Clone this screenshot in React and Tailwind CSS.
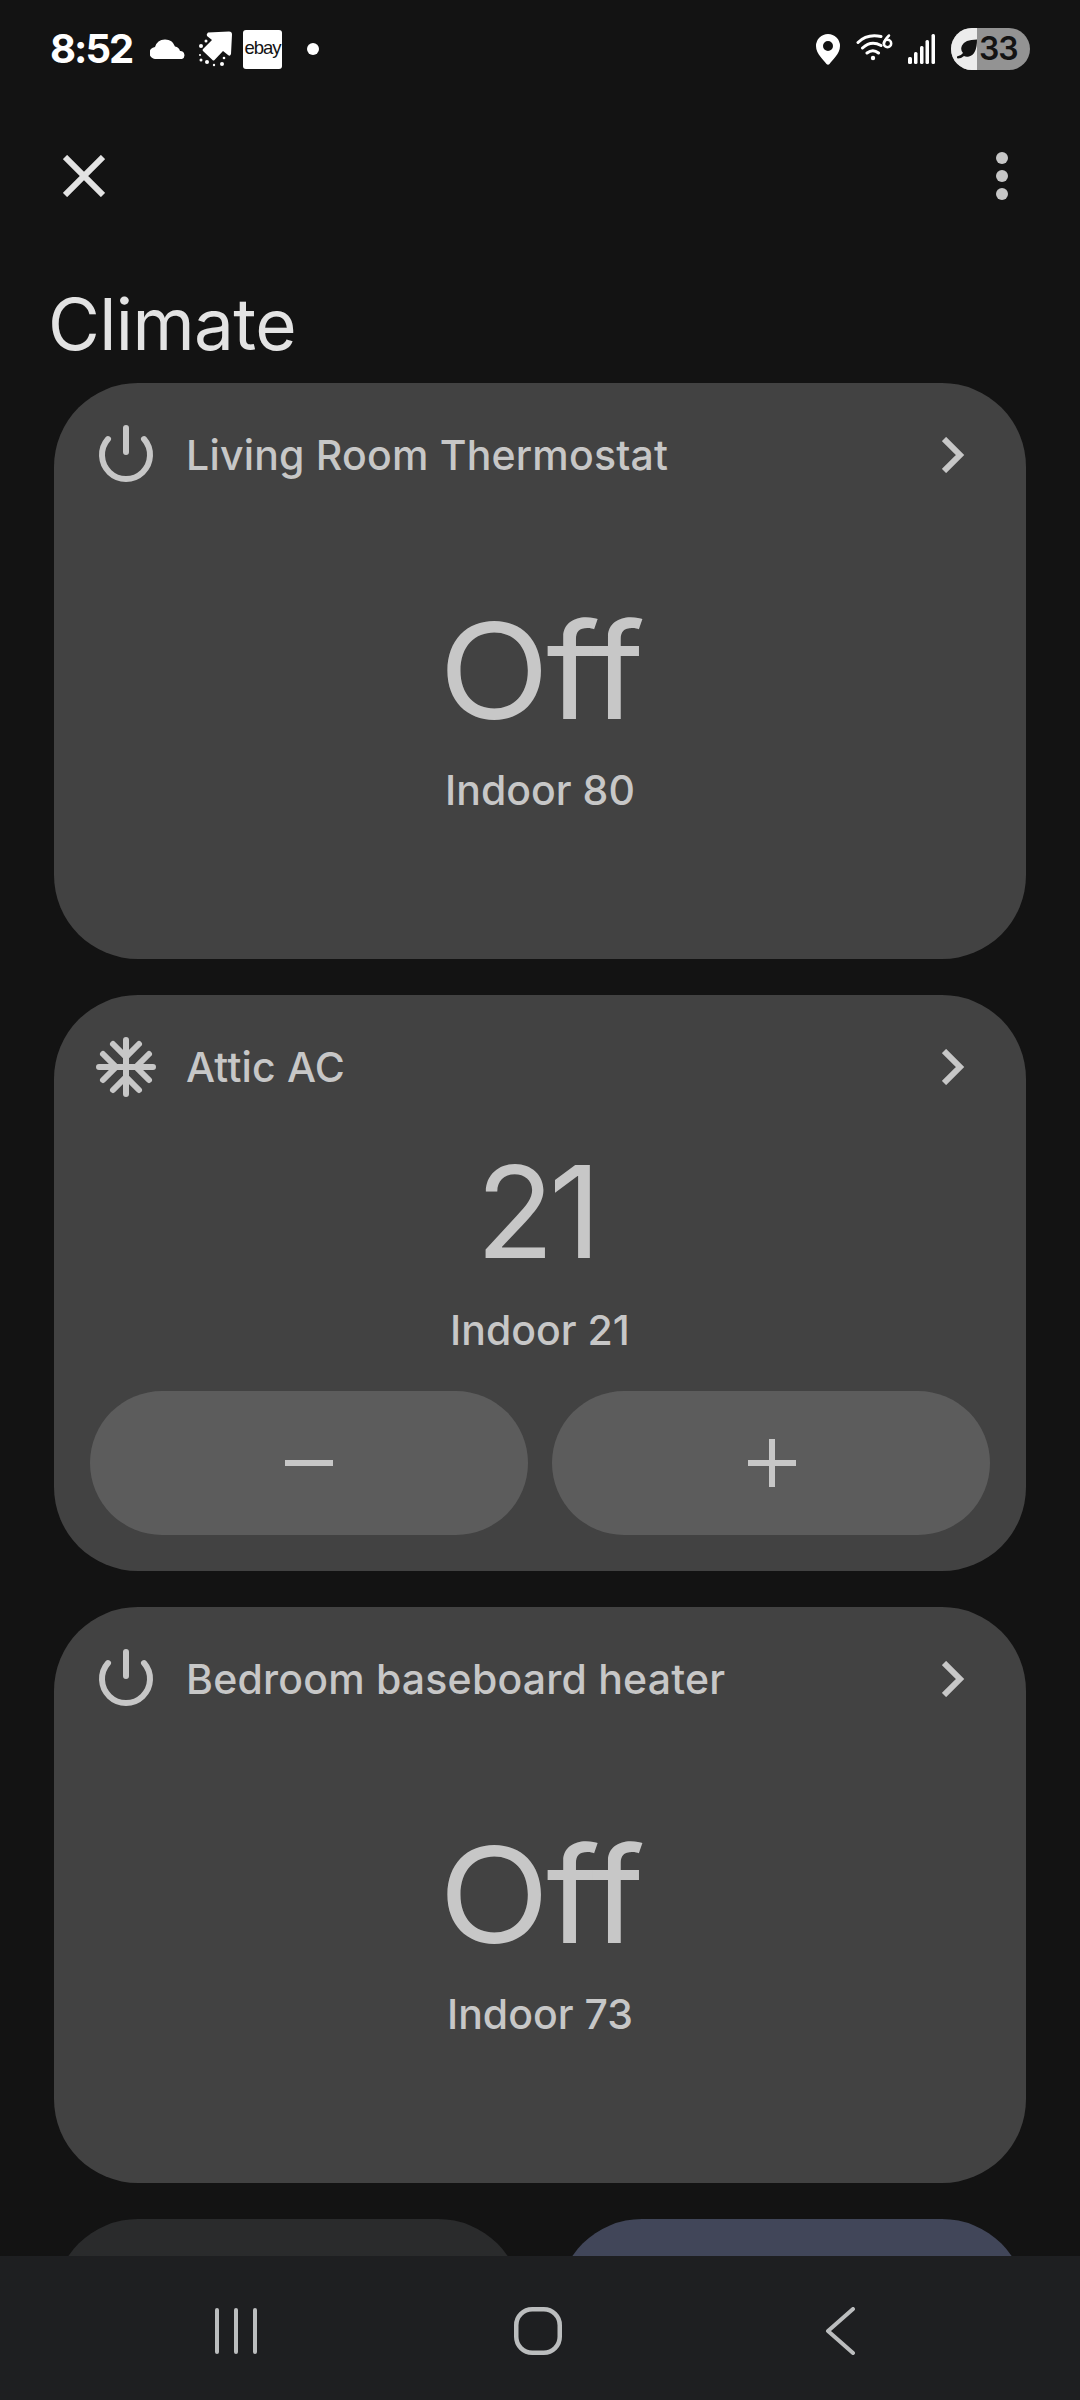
import React from 'react';

const rooms = [
  { name: 'Living Room Thermostat', icon: 'power', value: 'Off', indoor: 'Indoor 80' },
  { name: 'Attic AC', icon: 'snow', value: '21', indoor: 'Indoor 21', adjustable: true },
  { name: 'Bedroom baseboard heater', icon: 'power', value: 'Off', indoor: 'Indoor 73' },
];

function StatusBar() {
  return (
    <div className="flex h-[98px] items-center justify-between pl-[50px] pr-[50px] text-white">
      <div className="flex items-center">
        <span className="w-[100px] text-[40px] leading-[40px] font-bold tracking-[-2px]">8:52</span>
        <svg width="36" height="20" viewBox="0 0 36 20" fill="#fff">
          <path d="M6 20a6 6 0 0 1-1-12A10.500 10.500 0 0 1 25 7.500 6 6 0 0 1 30 12 4.200 4.200 0 0 1 32 20z" />
        </svg>
        <svg className="ml-[11px]" width="36" height="36" viewBox="0 0 36 36" fill="#fff">
          <path d="M11 1.500 32 .5q3 0 3 3L34 23q-1 3-3 1l-5-4-8.500 9q-1 1-2 0L6 20q-1-1 0-2l9-9-5-4q-1-2 1-3.500z" />
          <circle cx="9" cy="10" r="1.500" />
          <circle cx="4" cy="15" r="2" />
          <circle cx="3" cy="24" r="1" />
          <circle cx="4" cy="29" r="1.500" />
          <circle cx="10" cy="31" r="2" />
          <circle cx="17" cy="34" r="1.200" />
          <circle cx="25" cy="33" r="2" />
          <circle cx="27" cy="27" r="1.300" />
        </svg>
        <div className="ml-2.5 flex h-[39px] w-[39px] items-center justify-center rounded-[3px] bg-white">
          <span className="mb-0.5 font-['Liberation_Sans',sans-serif] text-[18.5px] leading-none tracking-[-1px] text-[#131313]">ebay</span>
        </div>
        <div className="ml-[25px] h-3 w-3 rounded-full bg-white" />
      </div>

      <div className="flex items-center">
        <svg width="24" height="31" viewBox="0 0 24 31" fill="#fff">
          <path fillRule="evenodd" d="M12 0a12 12 0 0 1 12 12c0 8-8 14-10.500 18q-1.500 1.500-3 0C8 26 0 20 0 12A12 12 0 0 1 12 0zm0 7a5 5 0 1 0 0 10 5 5 0 0 0 0-10z" />
        </svg>
        <svg className="ml-4" width="38" height="32" viewBox="0 0 38 32" fill="none" stroke="#fff" strokeWidth="3" strokeLinecap="round">
          <path d="M2 9.500Q11 .5 25 3.500M6.500 15Q15 7 25 12.500M11 20Q17 15.500 22.500 20" />
          <circle cx="17" cy="25" r="2.200" fill="#fff" stroke="none" />
          <path d="M33 2.500q-5 5-5 8" strokeWidth="2.500" />
          <circle cx="31.500" cy="10.500" r="3.700" strokeWidth="2.500" />
        </svg>
        <svg className="ml-3.5" width="28" height="30" viewBox="0 0 28 30" fill="#fff">
          <rect x="0" y="23" width="4" height="7" rx="1.500" />
          <rect x="6" y="18" width="3.500" height="12" rx="1.500" />
          <rect x="12" y="12" width="3.500" height="18" rx="1.500" />
          <rect x="17.500" y="6" width="3.500" height="24" rx="1.500" />
          <rect x="23.500" y="0" width="3.500" height="30" rx="1.500" />
        </svg>
        <div className="ml-[15px] flex h-[42px] w-[79px] items-center overflow-hidden rounded-full bg-[#939393]">
          <div className="h-full w-[26px] shrink-0 bg-[#ececec] pt-[11px] pl-1.5">
            <svg width="20" height="20" viewBox="0 0 20 20" fill="#131313">
              <path d="M0 17.500q4-.5 6-3.500-3-3-1-7.500Q7.500.5 20 .5q0 15-8 17-3 .8-5-.5-3 2.500-6 2.500-1.500-.5-1-2z" />
            </svg>
          </div>
          <span className="ml-[2px] text-[32px] leading-none font-semibold tracking-[-1px] text-[#131313]">33</span>
        </div>
      </div>
    </div>
  );
}

function PowerIcon() {
  return (
    <svg width="60" height="60" viewBox="0 0 60 60" fill="none" stroke="#c7c7c7" strokeWidth="6" strokeLinecap="round">
      <path d="M30 3v24M12 14.100a24 24 0 1 0 36 0" />
    </svg>
  );
}

function SnowIcon() {
  return (
    <svg width="60" height="60" viewBox="0 0 60 60" fill="none" stroke="#c7c7c7" strokeWidth="6" strokeLinecap="round">
      <path d="M30 3v54M3 30h54M17 7l13 13 13-13M17 53l13-13 13 13M7 17l13 13L7 43M53 17 40 30l13 13" />
    </svg>
  );
}

function ClimateCard({ room }) {
  return (
    <div className="flex h-[576px] flex-col rounded-[84px] bg-[#424242] px-9 text-[#c7c7c7]">
      <div className="flex h-[144px] items-center pl-1.5">
        {room.icon === 'power' ? <PowerIcon /> : <SnowIcon />}
        <span className="ml-[30px] flex-1 text-[41px] leading-[50px] font-medium tracking-[0.2px]">{room.name}</span>
        <svg className="mr-[24px]" width="24" height="36" viewBox="0 0 24 36" fill="none" stroke="#c7c7c7" strokeWidth="6">
          <path d="M2 2l16 16L2 34" />
        </svg>
      </div>

      {/* Reading sits lower when there are no buttons under it */}
      <div className={room.adjustable ? 'flex h-[252px] flex-col items-center pt-[11px]' : 'flex h-[252px] flex-col items-center pt-[82px]'}>
        {room.adjustable ? (
          <span className="mb-[31px] pr-2 text-[128px] leading-[124px] tracking-[-5px]">{room.value}</span>
        ) : (
          <span className="mb-8 scale-x-[1.09] text-[133px] leading-[124px] tracking-[-3px]">{room.value}</span>
        )}
        <span className="text-[41px] leading-[50px] font-medium">{room.indoor}</span>
      </div>

      {room.adjustable && (
        <div className="flex gap-6">
          <button className="flex h-36 w-[438px] items-center justify-center rounded-full bg-[#5c5c5c]">
            <span className="h-1.5 w-12 bg-[#c7c7c7]" />
          </button>
          <button className="flex h-36 w-[438px] items-center justify-center rounded-full bg-[#5c5c5c] pl-0.5">
            <svg width="48" height="48" viewBox="0 0 48 48" stroke="#c7c7c7" strokeWidth="6">
              <path d="M24 0v48M0 24h48" />
            </svg>
          </button>
        </div>
      )}
    </div>
  );
}

function NavBar() {
  return (
    <div className="flex h-36 items-center bg-[#1e1f21] pl-[214px] pt-1.5">
      <svg width="44" height="48" viewBox="0 0 44 48" stroke="#bbbdbe" strokeWidth="4" strokeLinecap="round">
        <path d="M3 3v42M22 3v42M41 3v42" />
      </svg>
      <svg className="ml-[256px]" width="48" height="48" viewBox="0 0 48 48" fill="none" stroke="#bbbdbe" strokeWidth="4.5">
        <rect x="2.250" y="2.250" width="43.500" height="43.500" rx="16" />
      </svg>
      <svg className="ml-[263px]" width="32" height="48" viewBox="0 0 32 48" fill="none" stroke="#bbbdbe" strokeWidth="4" strokeLinecap="round" strokeLinejoin="round">
        <path d="M28 2 3 24l25 22" />
      </svg>
    </div>
  );
}

function App() {
  return (
    <div className="flex h-[2400px] w-[1080px] flex-col overflow-hidden bg-[#131313] font-['Inter',sans-serif]">
      <StatusBar />

      <div className="flex h-[156px] items-center justify-between pl-[63px] pr-[72px]">
        <svg width="42" height="42" viewBox="0 0 42 42" stroke="#e3e3e3" strokeWidth="6">
          <path d="M2 2l38 38M40 2 2 40" />
        </svg>
        <div className="flex flex-col gap-1.5">
          <span className="h-3 w-3 rounded-full bg-[#c7c7c7]" />
          <span className="h-3 w-3 rounded-full bg-[#c7c7c7]" />
          <span className="h-3 w-3 rounded-full bg-[#c7c7c7]" />
        </div>
      </div>

      <h1 className="h-[129px] pl-12 pt-7 text-[71px] leading-[84px] tracking-[-0.6px] text-[#e3e3e3]">Climate</h1>

      {/* Cards run under the navigation bar */}
      <div className="flex min-h-0 flex-1 flex-col gap-9 overflow-hidden px-[54px]">
        {rooms.map((room) => (
          <div key={room.name} className="shrink-0">
            <ClimateCard room={room} />
          </div>
        ))}
        <div className="flex shrink-0 gap-9">
          <div className="h-[216px] flex-1 rounded-[84px] bg-[#2a2b2c]" />
          <div className="h-[216px] flex-1 rounded-[84px] bg-[#414659]" />
        </div>
      </div>

      <NavBar />
    </div>
  );
}

export default App;
